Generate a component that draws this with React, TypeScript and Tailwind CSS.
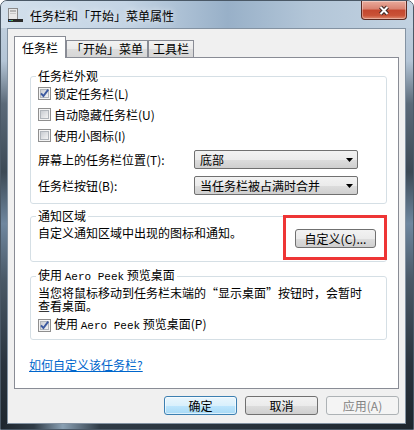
import type { ReactNode } from "react"

function CheckBox({ checked }: { checked?: boolean }) {
  return (
    <svg width="13" height="13" viewBox="0 0 13 13" className="shrink-0">
      <defs>
        <linearGradient id="cbfill" x1="0" y1="0" x2="1" y2="1">
          <stop offset="0" stopColor="#c6cad0" />
          <stop offset="1" stopColor="#f6f6f6" />
        </linearGradient>
      </defs>
      <rect x="0.5" y="0.5" width="12" height="12" fill="#f4f4f4" stroke="#8f8f8f" />
      <rect x="2.5" y="2.5" width="8" height="8" fill="url(#cbfill)" stroke="#b0b5bb" />
      {checked && (
        <path d="M3 6.3 L5.4 9 L10.2 2.6" fill="none" stroke="#3c5aa0" strokeWidth="1.9" />
      )}
    </svg>
  )
}

function CheckRow({ checked, children, h = "h-[21px]" }: { checked?: boolean; children: ReactNode; h?: string }) {
  return (
    <div className={`flex ${h} items-center pl-[7px]`}>
      <CheckBox checked={checked} />
      <span className="ml-[3px] leading-[14px]">{children}</span>
    </div>
  )
}

function Dropdown({ value }: { value: string }) {
  return (
    <div className="flex h-[19px] w-[164px] items-center justify-between rounded-[2px] border border-[#707070] bg-[linear-gradient(180deg,#f2f2f2_0%,#ebebeb_50%,#dddddd_51%,#cfcfcf_100%)] pl-[5px] pr-[4px]">
      <span className="leading-[14px]">{value}</span>
      <svg width="7" height="4" viewBox="0 0 7 4">
        <polygon points="0,0 7,0 3.5,4" fill="#000" />
      </svg>
    </div>
  )
}

const Mono = ({ children }: { children: ReactNode }) => (
  <span className="font-['Liberation_Mono',monospace] text-[11px]">{children}</span>
)

export default function App() {
  return (
    <div className="relative h-[430px] w-[414px] overflow-hidden rounded-t-[7px] border border-[#4a5866] bg-[linear-gradient(180deg,#c8d6e4_0%,#b4c5d6_14%,#5b6a79_24%,#3c4955_40%,#6f879f_52%,#4a5967_65%,#2a343e_85%,#1e262e_100%)] font-['Noto_Sans_CJK_SC','Noto_Sans',sans-serif] text-[12px] text-black">
      {/* title bar */}
      <div className="flex h-[27px] bg-[linear-gradient(90deg,#d3e0ec_0%,#c4d4e4_30%,#98b0c8_55%,#b3c6d8_75%,#c2d2e1_100%)]">
        <div className="flex items-center gap-[7px] pl-[6px] pt-[2px]">
          <svg width="16" height="15" viewBox="0 0 16 15">
            <rect x="1.5" y="0.5" width="9" height="11" fill="#e8e8e8" stroke="#8a8a8a" />
            <rect x="3" y="2" width="6" height="2" fill="#b5b5b5" />
            <rect x="3" y="5" width="6" height="1" fill="#c8c8c8" />
            <rect x="1" y="11" width="15" height="3" fill="#2b2b2b" />
            <rect x="2" y="12" width="2" height="1" fill="#3a8ee6" />
            <rect x="4" y="12" width="2" height="1" fill="#5cb85c" />
          </svg>
          <span className="leading-[14px] [text-shadow:0_0_6px_rgba(255,255,255,0.9)]">任务栏和「开始」菜单属性</span>
        </div>
        <div className="ml-auto mr-[6px] flex h-[19px] w-[46px] items-center justify-center rounded-b-[4px] border border-t-0 border-[#5a2a22] bg-[linear-gradient(180deg,#e9ab9c_0%,#d98270_45%,#c4472f_50%,#c95237_80%,#e08a70_100%)] shadow-[inset_0_0_0_1px_rgba(255,255,255,0.35)]">
          <svg width="14" height="11" viewBox="0 0 14 11">
            <path d="M3.5 2 L10.5 9 M10.5 2 L3.5 9" stroke="#3a2623" strokeWidth="4" />
            <path d="M3.5 2 L10.5 9 M10.5 2 L3.5 9" stroke="#ffffff" strokeWidth="2" />
          </svg>
        </div>
      </div>

      {/* client area */}
      <div className="ml-[6px] flex h-[396px] w-[399px] flex-col border border-[#8392a2] bg-[#f0f0f0] px-[6px] pt-[7px]">
        {/* tabs */}
        <div className="flex h-[21px] items-end">
          <div className="relative z-10 -mb-px flex h-[22px] w-[52px] items-center justify-center border border-b-0 border-[#898c95] bg-white leading-[14px]">
            任务栏
          </div>
          <div className="flex h-[17px] w-[82px] items-center justify-center border border-b-0 border-[#898c95] bg-[linear-gradient(180deg,#f2f2f2_0%,#ebebeb_50%,#dddddd_51%,#d6d6d6_100%)] leading-[14px]">
            「开始」菜单
          </div>
          <div className="flex h-[17px] w-[46px] items-center justify-center border border-b-0 border-[#898c95] bg-[linear-gradient(180deg,#f2f2f2_0%,#ebebeb_50%,#dddddd_51%,#d6d6d6_100%)] leading-[14px]">
            工具栏
          </div>
        </div>

        {/* panel */}
        <div className="flex h-[332px] flex-col border border-[#898c95] bg-white pt-[11px]">
          <fieldset className="ml-[15px] w-[357px] rounded-[3px] border border-[#d5dfe5] pb-[8px]">
            <legend className="ml-[5px] px-[2px] leading-[14px]">任务栏外观</legend>
            <CheckRow checked>锁定任务栏(L)</CheckRow>
            <CheckRow>自动隐藏任务栏(U)</CheckRow>
            <CheckRow>使用小图标(I)</CheckRow>
            <div className="mt-[4px] flex items-center pl-[7px]">
              <span className="w-[156px] leading-[14px]">屏幕上的任务栏位置(T):</span>
              <Dropdown value="底部" />
            </div>
            <div className="mt-[7px] flex items-center pl-[7px]">
              <span className="w-[156px] leading-[14px]">任务栏按钮(B):</span>
              <Dropdown value="当任务栏被占满时合并" />
            </div>
          </fieldset>

          <fieldset className="ml-[15px] mt-[5px] w-[357px] rounded-[3px] border border-[#d5dfe5] pb-[13px]">
            <legend className="ml-[5px] px-[2px] leading-[14px]">通知区域</legend>
            <div className="flex items-start justify-between pl-[7px] pr-[10px]">
              <span className="mt-[3px] leading-[14px]">自定义通知区域中出现的图标和通知。</span>
              <div className="mt-[6px] flex h-[19px] w-[81px] items-center justify-center rounded-[3px] border border-[#707070] bg-[linear-gradient(180deg,#f2f2f2_0%,#ebebeb_50%,#dddddd_51%,#cfcfcf_100%)] leading-[14px]">
                自定义(C)...
              </div>
            </div>
          </fieldset>

          <fieldset className="ml-[15px] mt-[6px] w-[357px] rounded-[3px] border border-[#d5dfe5] pb-[4px]">
            <legend className="ml-[5px] px-[2px] leading-[14px]">
              使用 <Mono>Aero Peek</Mono> 预览桌面
            </legend>
            <p className="mt-[2px] pl-[7px] leading-[13px]">
              当您将鼠标移动到任务栏末端的“显示桌面”按钮时，会暂时
              <br />
              查看桌面。
            </p>
            <div className="mt-[3px]">
              <CheckRow checked h="h-[20px]">
                使用 <Mono>Aero Peek</Mono> 预览桌面(P)
              </CheckRow>
            </div>
          </fieldset>

          <a className="ml-[14px] mt-[18px] self-start leading-[14px] text-[#0066cc] underline">如何自定义该任务栏?</a>
        </div>

        {/* buttons */}
        <div className="mt-[7px] flex justify-end gap-[8px]">
          <div className="flex h-[19px] w-[73px] items-center justify-center rounded-[3px] border border-[#3c7fb1] bg-[linear-gradient(180deg,#eaf6fd_0%,#d9f0fc_50%,#bee6fd_51%,#a7d9f5_100%)] leading-[14px] shadow-[inset_0_0_0_1px_rgba(255,255,255,0.6)]">
            确定
          </div>
          <div className="flex h-[19px] w-[73px] items-center justify-center rounded-[3px] border border-[#707070] bg-[linear-gradient(180deg,#f2f2f2_0%,#ebebeb_50%,#dddddd_51%,#cfcfcf_100%)] leading-[14px]">
            取消
          </div>
          <div className="flex h-[19px] w-[73px] items-center justify-center rounded-[3px] border border-[#adb2b5] bg-[#f4f4f4] leading-[14px] text-[#838383]">
            应用(A)
          </div>
        </div>
      </div>

      {/* bottom frame highlight */}
      <div className="h-[5px] bg-[linear-gradient(90deg,#1e262e_0%,#2f3b46_8%,#8aa0b3_15%,#2f3b46_24%,#1e262e_100%)]" />

      {/* red annotation box */}
      <div className="absolute left-[282px] top-[214px] h-[45px] w-[104px] border-[3px] border-[#ee3535]" />
    </div>
  )
}
